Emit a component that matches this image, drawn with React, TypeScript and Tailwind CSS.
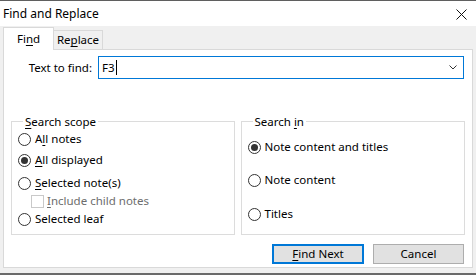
import React from "react";

function Radio({ checked }: { checked?: boolean }) {
  return (
    <span className="w-[13px] h-[13px] rounded-full border border-[#333333] bg-white flex items-center justify-center shrink-0">
      {checked && <span className="w-[7px] h-[7px] rounded-full bg-[#333333]" />}
    </span>
  );
}

function RadioRow({
  checked,
  children,
  className = "",
}: {
  checked?: boolean;
  children: React.ReactNode;
  className?: string;
}) {
  return (
    <div className={`flex items-center gap-[4px] h-[16px] ${className}`}>
      <Radio checked={checked} />
      <span className="leading-none">{children}</span>
    </div>
  );
}

const U = ({ children }: { children: React.ReactNode }) => (
  <span className="underline underline-offset-2">{children}</span>
);

export default function App() {
  return (
    <div className="w-[476px] h-[275px] flex flex-col bg-[#f0f0f0] border-t border-[#5f5f5f] overflow-hidden font-['Segoe_UI','Noto_Sans',sans-serif] text-[11.5px] text-black">
      {/* title bar */}
      <div className="h-[25px] bg-white flex items-center justify-between pl-[3px] pr-[9px] shrink-0">
        <span className="text-[12px]">Find and Replace</span>
        <svg width="11" height="11" viewBox="0 0 11 11" className="mt-[1px]">
          <path d="M0.5 0.5 L10.5 10.5 M10.5 0.5 L0.5 10.5" stroke="#111" strokeWidth="1" />
        </svg>
      </div>

      <div className="flex-1 flex flex-col pl-[3px] pr-[3px] pt-[2px]">
        {/* tabs */}
        <div className="flex items-end h-[22px] relative z-10 -mb-px">
          <div className="w-[51px] h-[23px] bg-white border border-b-0 border-[#d9d9d9] flex items-center justify-center pb-[1px]">
            Fi<U>n</U>d
          </div>
          <div className="w-[49px] h-[20px] bg-[#f0f0f0] border border-l-0 border-[#d9d9d9] flex items-center justify-center">
            Re<U>p</U>lace
          </div>
        </div>

        {/* page */}
        <div className="h-[219px] bg-white border border-[#d9d9d9] flex flex-col px-[7px]">
          <div className="flex items-center mt-[6px] h-[23px]">
            <span className="w-[87px] text-right pr-[6px]">Text to find:</span>
            <div className="w-[366px] h-[23px] border border-[#0078d7] flex items-center justify-between pl-[3px] pr-[6px]">
              <span className="flex items-center">
                F3<span className="w-px h-[15px] bg-black ml-[1px]" />
              </span>
              <svg width="8" height="5" viewBox="0 0 8 5">
                <path d="M0.5 0.5 L4 4 L7.5 0.5" stroke="#333" strokeWidth="1" fill="none" />
              </svg>
            </div>
          </div>

          <div className="flex gap-[6px] mt-[35px]">
            <fieldset className="w-[224px] h-[121px] border border-[#dcdcdc] pl-[6px] m-0">
              <legend className="ml-[5px] px-[2px] leading-[15px]">
                <U>S</U>earch scope
              </legend>
              <RadioRow className="mt-[2px]">
                A<U>l</U>l notes
              </RadioRow>
              <RadioRow checked className="mt-[5px]">
                <U>A</U>ll displayed
              </RadioRow>
              <RadioRow className="mt-[7px]">
                <U>S</U>elected note(s)
              </RadioRow>
              <div className="flex items-center gap-[3px] h-[16px] mt-[2px] pl-[13px] text-[#6d6d6d]">
                <span className="w-[13px] h-[13px] border border-[#c9c9c9] bg-white shrink-0" />
                <span className="leading-none">
                  <U>I</U>nclude child notes
                </span>
              </div>
              <RadioRow className="mt-[2px]">Selected leaf</RadioRow>
            </fieldset>

            <fieldset className="w-[225px] h-[121px] border border-[#dcdcdc] pl-[6px] m-0">
              <legend className="ml-[5px] px-[2px] leading-[15px]">
                Search <U>i</U>n
              </legend>
              <RadioRow checked className="mt-[10px]">
                Note content and titles
              </RadioRow>
              <RadioRow className="mt-[17px]">Note content</RadioRow>
              <RadioRow className="mt-[18px]">Titles</RadioRow>
            </fieldset>
          </div>

          <div className="flex justify-end gap-[9px] mt-[9px] pr-[1px]">
            <button className="w-[92px] h-[20px] bg-[#e1e1e1] border-2 border-[#0078d7] flex items-center justify-center">
              <U>F</U>ind Next
            </button>
            <button className="w-[91px] h-[20px] bg-[#e1e1e1] border border-[#adadad] flex items-center justify-center">
              Cancel
            </button>
          </div>
        </div>
        <div className="flex-1" />
      </div>
      <div className="h-[2px] bg-[#6a6a6a] shrink-0" />
    </div>
  );
}
